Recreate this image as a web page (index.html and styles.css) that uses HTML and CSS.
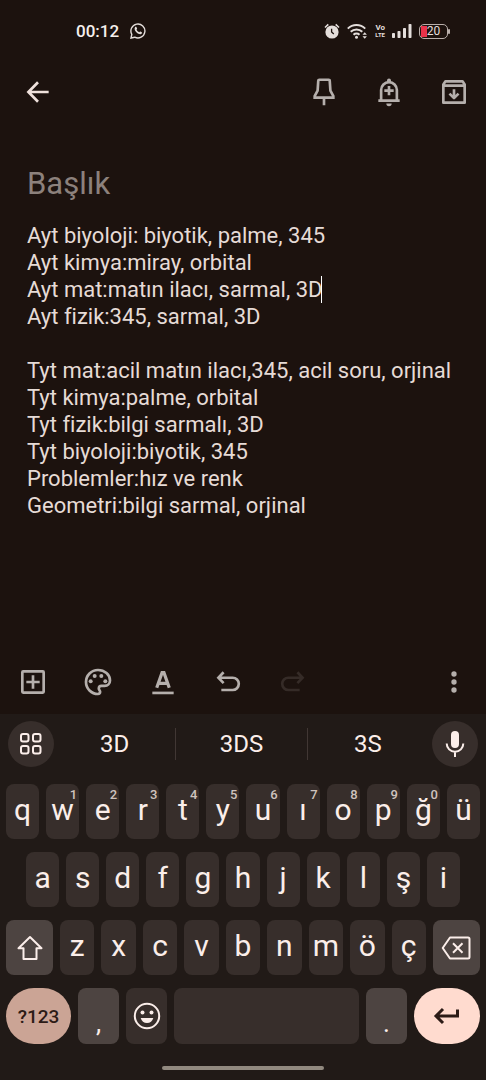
FILE: index.html
```
<!DOCTYPE html>
<html lang="tr">
<head>
<meta charset="utf-8">
<meta name="viewport" content="width=device-width, initial-scale=1">
<title>Not</title>
<link rel="stylesheet" href="styles.css">
</head>
<body>
<div class="status">
  <div class="status-group">
    <time>00:12</time>
    <svg class="s16" viewBox="0 0 16 16" fill="none" stroke="currentColor"><path stroke-width="1.4" d="M1 15l.8-3.6A7 7 0 1 1 4.700 14.200z"/><path fill="currentColor" stroke="none" d="M5 4.300c.5-.6 1.200-.6 1.500 0l.6 1.300c.1.400-.5.900-.6 1.200.6 1.200 1.500 2 2.700 2.500.4-.1.800-.9 1.200-.8l1.400.7c.5.4 0 1.500-.7 1.900-1.200.6-3.100-.2-4.500-1.500C5 8.100 4 6 5 4.300z"/></svg>
  </div>
  <div class="status-group status-right">
    <svg class="s16" viewBox="0 0 16 16"><circle cx="8" cy="9" r="6.600" fill="currentColor"/><path d="M1 4.500L4.300 1.400M15 4.500L11.700 1.400" stroke="currentColor" stroke-width="1.600"/><path d="M7.600 5.800V9l2.200 2" fill="none" stroke="#1c120e" stroke-width="1.300"/></svg>
    <svg class="wifi" viewBox="0 0 21 16" fill="none" stroke="currentColor"><path stroke-width="2" d="M.8 5.600a12.500 12.500 0 0 1 17.400 0M3.700 8.800a8.400 8.400 0 0 1 11.600 0M6.500 11.800a4.400 4.400 0 0 1 6 0"/><circle cx="9.500" cy="14.300" r="1.500" fill="currentColor" stroke="none"/><path fill="currentColor" stroke="none" d="M15.500 11.700l2.200-2.500 2.200 2.500zM15.500 13.200l2.200 2.500 2.200-2.500z"/></svg>
    <span class="volte"><span>Vo</span><span class="lte">LTE</span></span>
    <svg class="signal" viewBox="0 0 20 14" fill="currentColor"><rect x="0" y="9" width="3" height="5" rx=".8"/><rect x="5.500" y="7" width="3" height="7" rx=".8"/><rect x="11" y="4" width="3" height="10" rx=".8"/><rect x="16.500" y="0" width="3" height="14" rx=".8"/></svg>
    <span class="battery"><span>20</span></span>
  </div>
</div>

<header class="appbar">
  <button class="tool back" aria-label="Geri"><svg viewBox="0 0 24 24"><path d="M20 12H5M12 4.700L4.800 12l7.200 7.300"/></svg></button>
  <span class="spring"></span>
  <button class="tool" aria-label="Sabitle"><svg viewBox="0 0 24 24"><path d="M8.500 2.800h7a.8.800 0 0 1 .8.800L16.800 11l2.200 4v1.200H5V15l2.200-4 .5-7.400a.8.800 0 0 1 .8-.8zM12 16.500V22"/></svg></button>
  <button class="tool" aria-label="Hatırlatıcı"><svg viewBox="0 0 24 24"><path d="M4 18.500h16M6.100 18v-7.500a5.900 5.900 0 0 1 11.800 0V18M12 7.500v7M8.500 11h7"/><path class="solid" d="M10.500 4.500V3.300a1.500 1.500 0 0 1 3 0v1.200zM10 20.700h4a2 2 0 0 1-4 0z"/></svg></button>
  <button class="tool" aria-label="Arşivle"><svg viewBox="0 0 24 24" class="soft"><path d="M4 6.300L5.600 4h12.800L20 6.300V20H4zM4 7.200h16M12 10v6.500M8.600 13.200l3.400 3.400 3.400-3.400"/></svg></button>
</header>

<main class="note">
  <input class="title" type="text" placeholder="Başlık" aria-label="Başlık">
  <div class="editor">
    <textarea class="text" rows="11" aria-label="Not" spellcheck="false">Ayt biyoloji: biyotik, palme, 345
Ayt kimya:miray, orbital
Ayt mat:matın ilacı, sarmal, 3D
Ayt fizik:345, sarmal, 3D

Tyt mat:acil matın ilacı,345, acil soru, orjinal
Tyt kimya:palme, orbital
Tyt fizik:bilgi sarmalı, 3D
Tyt biyoloji:biyotik, 345
Problemler:hız ve renk
Geometri:bilgi sarmal, orjinal</textarea>
    <span class="caret"></span>
  </div>
</main>

<div class="toolbar">
  <button class="tool" aria-label="Ekle"><svg viewBox="0 0 24 24"><rect x="4" y="4" width="16" height="16" rx=".6"/><path d="M12 7v10M7 12h10"/></svg></button>
  <button class="tool" aria-label="Palet"><svg viewBox="0 0 24 24"><path d="M12 3a9 9 0 0 0 0 18c1 0 1.600-.7 1.600-1.600 0-1.100-1-1.400-1-2.600s.8-1.900 2-1.900H17c2.300 0 4-1.700 4-4C21 6.400 17 3 12 3z"/><g class="solid"><circle cx="6.500" cy="11.500" r="1.500"/><circle cx="9.500" cy="7.500" r="1.500"/><circle cx="14.500" cy="7.500" r="1.500"/><circle cx="17.500" cy="11.500" r="1.500"/></g></svg></button>
  <button class="tool" aria-label="Biçimlendirme"><svg viewBox="0 0 24 24"><path d="M4 20.200h16"/><path d="M7.300 16.300L11.300 5h1.400l4 11.300M8.800 13h6.400" stroke-width="2.400"/></svg></button>
  <button class="tool" aria-label="Geri al"><svg viewBox="0 0 24 24"><path d="M8.700 4.700L4.800 8.800l3.900 4M5 8.800h10.500a4.600 4.600 0 0 1 0 9.200H7"/></svg></button>
  <button class="tool" aria-label="Yinele" disabled><svg viewBox="0 0 24 24"><path d="M15.300 4.700l3.900 4.100-3.900 4M19 8.800H8.500a4.600 4.600 0 0 0 0 9.200H17"/></svg></button>
  <span class="spring"></span>
  <button class="tool" aria-label="Diğer"><svg viewBox="0 0 24 24" class="dots"><circle cx="12" cy="6" r="2"/><circle cx="12" cy="12" r="2"/><circle cx="12" cy="18" r="2"/></svg></button>
</div>

<section class="keyboard" aria-label="Klavye">
  <div class="suggest">
    <button class="round" aria-label="Menü"><svg viewBox="0 0 24 24"><rect x="2" y="2" width="7.500" height="7.500" rx="2"/><rect x="14" y="2" width="7.500" height="7.500" rx="2"/><rect x="2" y="14" width="7.500" height="7.500" rx="2"/><rect x="14" y="14" width="7.500" height="7.500" rx="2"/></svg></button>
    <div class="words"><button>3D</button><button>3DS</button><button>3S</button></div>
    <button class="round" aria-label="Sesle yazma"><svg viewBox="0 0 24 28" class="mic"><rect x="8" y="1" width="8" height="17" rx="4" fill="currentColor" stroke="none"/><path d="M3.700 13.500a8.300 8.300 0 0 0 16.600 0M12 22v5"/></svg></button>
  </div>
  <div class="row">
    <button class="key">q</button><button class="key">w<sup>1</sup></button><button class="key">e<sup>2</sup></button><button class="key">r<sup>3</sup></button><button class="key">t<sup>4</sup></button><button class="key">y<sup>5</sup></button><button class="key">u<sup>6</sup></button><button class="key">ı<sup>7</sup></button><button class="key">o<sup>8</sup></button><button class="key">p<sup>9</sup></button><button class="key">ğ<sup>0</sup></button><button class="key">ü</button>
  </div>
  <div class="row inset">
    <button class="key">a</button><button class="key">s</button><button class="key">d</button><button class="key">f</button><button class="key">g</button><button class="key">h</button><button class="key">j</button><button class="key">k</button><button class="key">l</button><button class="key">ş</button><button class="key">i</button>
  </div>
  <div class="row">
    <button class="key mod shift" aria-label="Büyük harf"><svg viewBox="0 0 28 28"><path d="M14 3L2.500 14.200H7.500V25H20.500V14.200h5z"/></svg></button>
    <button class="key">z</button><button class="key">x</button><button class="key">c</button><button class="key">v</button><button class="key">b</button><button class="key">n</button><button class="key">m</button><button class="key">ö</button><button class="key">ç</button>
    <button class="key mod shift" aria-label="Sil"><svg class="erase" viewBox="0 0 30 24"><path d="M9 1.500h18a1.500 1.500 0 0 1 1.500 1.500v18a1.500 1.500 0 0 1-1.500 1.500H9L1.700 12zM12 7.200l9.500 9.600M21.500 7.200L12 16.800"/></svg></button>
  </div>
  <div class="row last">
    <button class="key symbols">?123</button>
    <button class="key mod side low">,</button>
    <button class="key side" aria-label="Emoji"><svg viewBox="0 0 28 28"><circle cx="14" cy="14" r="12.200"/><g class="solid"><circle cx="9.500" cy="10.500" r="2"/><circle cx="18.500" cy="10.500" r="2"/><path d="M7.700 16h12.600c-.8 3-3.200 5-6.300 5s-5.500-2-6.300-5z"/></g></svg></button>
    <button class="key space" aria-label="Boşluk"></button>
    <button class="key mod side low">.</button>
    <button class="key enter" aria-label="Enter"><svg viewBox="0 0 28 20"><path d="M10 3L3 10l7 7M3.500 10h21V3.500"/></svg></button>
  </div>
  <div class="home"></div>
</section>
</body>
</html>
```
FILE: styles.css
```
* { box-sizing: border-box; }

body {
  margin: 0;
  min-height: 100vh;
  display: flex;
  flex-direction: column;
  background: #1c120e;
  color: #e6dbd6;
  font-family: Roboto, "Noto Sans", sans-serif;
}

button, input, textarea {
  margin: 0;
  padding: 0;
  border: 0;
  outline: 0;
  background: none;
  color: inherit;
  font: inherit;
}

svg { display: block; }

.status {
  height: 62px;
  padding: 0 36px 0 76px;
  display: flex;
  align-items: center;
  justify-content: space-between;
  color: #e4dedb;
}
.status-group { display: flex; align-items: center; gap: 11px; }
.status-right { gap: 7px; }
.status time { font-size: 17px; font-weight: 500; color: #f5efec; }
.s16 { width: 16px; height: 16px; }
.wifi { width: 21px; height: 16px; }
.signal { width: 20px; height: 14px; }
.volte {
  display: flex;
  flex-direction: column;
  align-items: center;
  font: 700 8px/7px Roboto, sans-serif;
}
.lte { font-size: 6px; }
.battery {
  position: relative;
  width: 29px;
  height: 15px;
  margin-right: 2px;
  border: 1px solid #b9afab;
  border-radius: 5px;
  background: linear-gradient(to right, #e8334a 6px, transparent 6px) 1px 1px / 25px 11px no-repeat;
  font: 400 12px/13px Roboto, sans-serif;
  text-align: center;
}
.battery::after {
  content: "";
  position: absolute;
  right: -3px;
  top: 4px;
  width: 2px;
  height: 5px;
  border-radius: 1px;
  background: #b9afab;
}

.appbar, .toolbar { display: flex; height: 60px; color: #b5afac; }
.toolbar { height: 64px; }
.spring { flex: 1; }
.tool {
  width: 65px;
  display: flex;
  align-items: center;
  justify-content: center;
}
.tool svg {
  width: 32px;
  height: 32px;
  fill: none;
  stroke: currentColor;
  stroke-width: 2;
}
.tool .soft { stroke-linejoin: round; }
.tool .solid, .tool .dots, .key .solid { fill: currentColor; stroke: none; }
.tool:disabled { color: #352b27; }
.back { margin-left: 5px; color: #efe1dc; }

.note { flex: 1; padding: 39px 27px 0; }
.title {
  display: block;
  width: 100%;
  height: 44px;
  font-size: 31px;
}
.title::placeholder { color: #8c817c; opacity: 1; }
.editor { position: relative; margin-top: 17px; }
.text {
  display: block;
  width: 100%;
  resize: none;
  overflow: hidden;
  white-space: pre-wrap;
  font-size: 22px;
  line-height: 27px;
}
.caret {
  position: absolute;
  left: 294px;
  top: 54px;
  width: 1px;
  height: 27px;
  background: #fff;
}

.keyboard {
  padding: 7px 6px 10px;
  display: flex;
  flex-direction: column;
  gap: 13px;
  background: #211a17;
  color: #fbeeea;
}
.suggest {
  display: flex;
  align-items: center;
  padding: 0 2px;
  margin-bottom: 4px;
}
.round {
  width: 46px;
  height: 46px;
  display: flex;
  align-items: center;
  justify-content: center;
  border-radius: 50%;
  background: #372e2b;
}
.round svg { width: 24px; height: 24px; fill: none; stroke: currentColor; stroke-width: 2; }
.round .mic { height: 28px; }
.words {
  flex: 1;
  margin-right: 4px;
  display: grid;
  grid-template-columns: 12fr 13fr 12fr;
  font-size: 24px;
  line-height: 32px;
}
.words button + button { border-left: 1px solid #413734; }

.row { display: flex; gap: 7px; height: 55px; }
.inset { padding: 0 20px; }
.key {
  position: relative;
  flex: 1 1 0;
  min-width: 0;
  padding-bottom: 4px;
  display: flex;
  align-items: center;
  justify-content: center;
  border-radius: 8px;
  background: #372e2b;
  font-size: 30px;
}
.key sup {
  position: absolute;
  top: 4px;
  right: 2px;
  font-size: 13px;
  font-weight: 500;
  line-height: 14px;
  color: #cfc3be;
}
.key svg {
  width: 28px;
  height: 28px;
  fill: none;
  stroke: currentColor;
  stroke-width: 2;
  stroke-linejoin: round;
}
.mod { background: #4d4441; }
.shift { flex: 0 0 47px; padding: 0; }
.key .erase { width: 30px; height: 24px; }
.last { height: 56px; }
.last .key { padding: 0; }
.side { flex: 0 0 41px; }
.last .low { align-items: flex-end; padding-bottom: 6px; font-size: 26px; }
.last .symbols, .last .enter { flex: 0 0 65px; border-radius: 28px; color: #2c1b16; }
.last .symbols { background: #cba495; font-size: 19px; font-weight: 500; }
.last .enter { flex-basis: 66px; background: #ffdbcf; }
.last .enter svg { height: 20px; stroke-width: 3; stroke-linejoin: miter; }
.home {
  width: 34%;
  height: 4px;
  margin: 9px auto 0;
  border-radius: 2px;
  background: #91897f;
}
```
